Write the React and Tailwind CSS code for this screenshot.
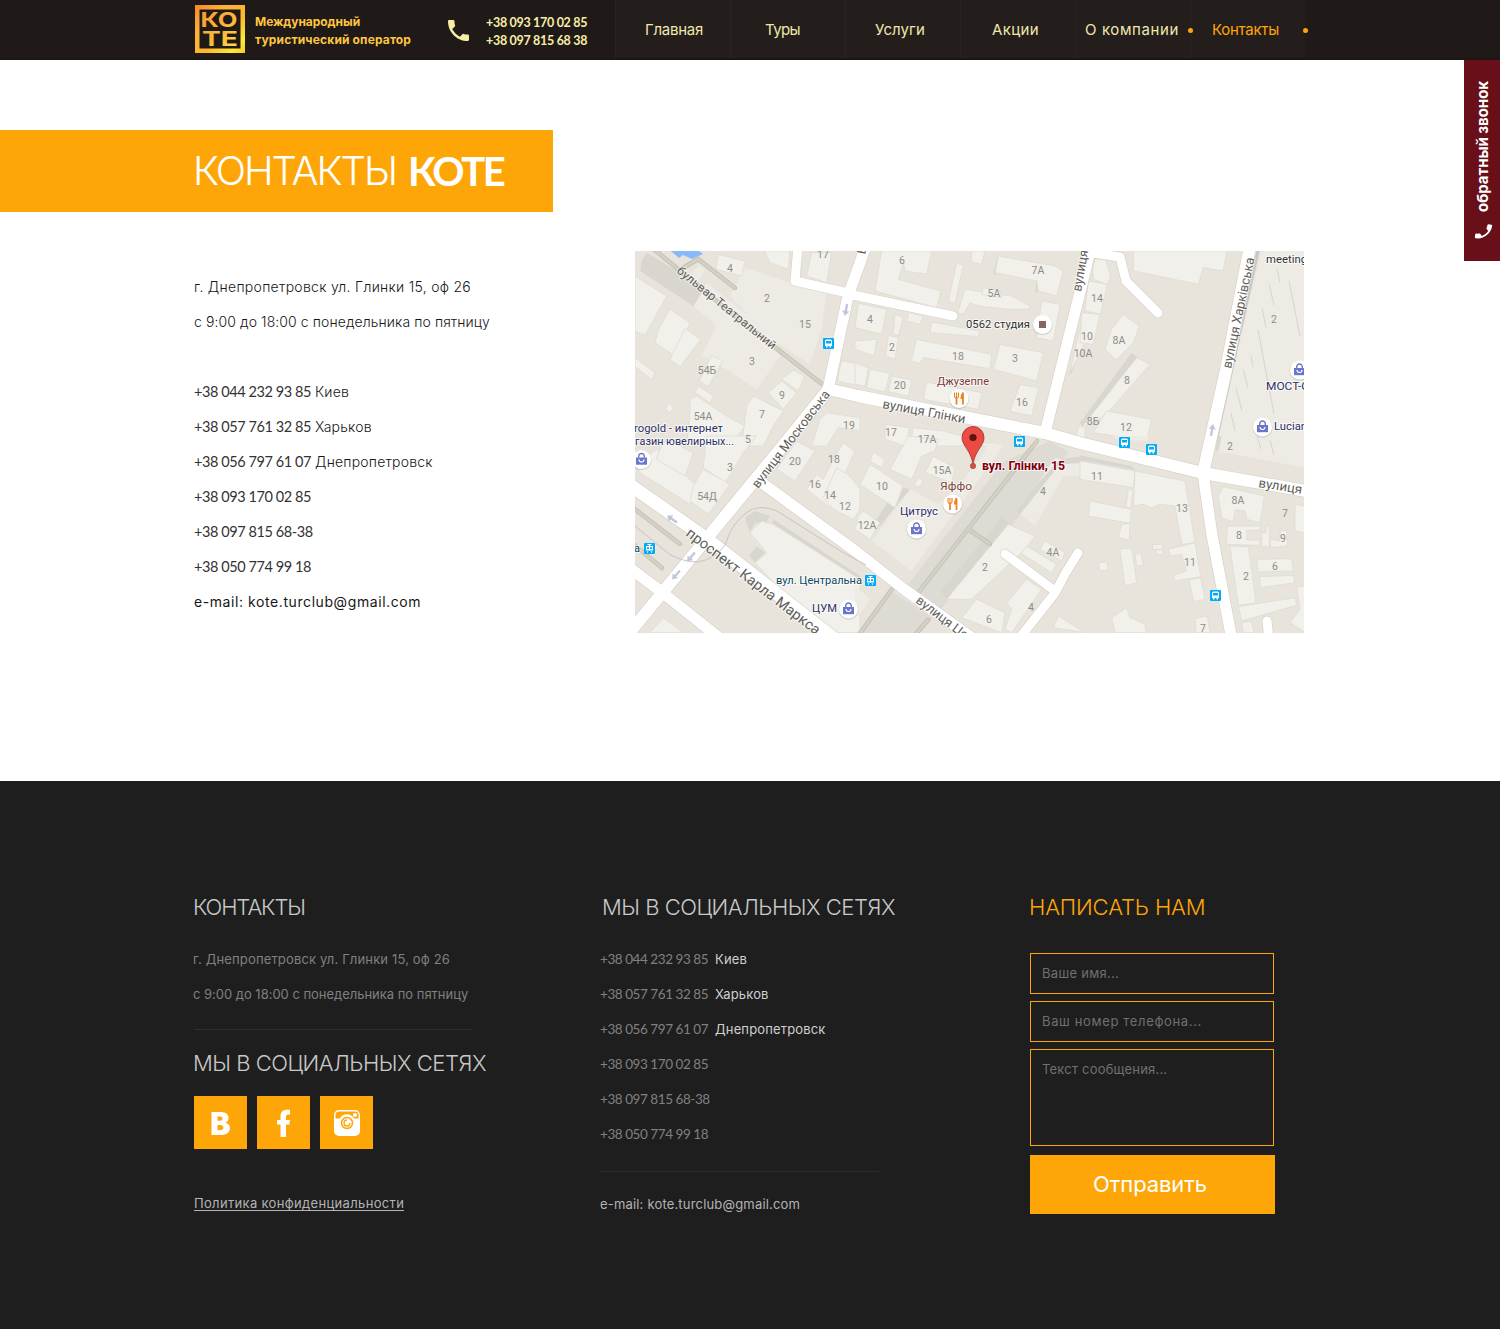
const NAV = [
  { label: "Главная", cls: "pl-[29px] tracking-[-0.26px]" },
  { label: "Туры", cls: "pl-[34px] tracking-[-0.6px]" },
  { label: "Услуги", cls: "pl-[29px] tracking-[0.1px]" },
  { label: "Акции", cls: "pl-[31px] tracking-[0.36px]" },
  { label: "О компании", cls: "pl-[9px] tracking-[0.6px]", dot: true },
  { label: "Контакты", cls: "pl-[21px] tracking-[-0.27px] text-[#fea607]", dot: true },
];

const PHONES = [
  { number: "+38 044 232 93 85", city: "Киев" },
  { number: "+38 057 761 32 85", city: "Харьков" },
  { number: "+38 056 797 61 07", city: "Днепропетровск" },
  { number: "+38 093 170 02 85" },
  { number: "+38 097 815 68-38" },
  { number: "+38 050 774 99 18" },
];

const HANDSET =
  "M6.62 10.79c1.44 2.83 3.76 5.14 6.59 6.59l2.2-2.2c.27-.27.67-.36 1.02-.24 1.12.37 2.33.57 3.57.57.55 0 1 .45 1 1V20c0 .55-.45 1-1 1-9.39 0-17-7.61-17-17 0-.55.45-1 1-1h3.5c.55 0 1 .45 1 1 0 1.25.2 2.45.57 3.57.11.35.03.74-.25 1.02l-2.2 2.2z";

function Logo() {
  return (
    <svg className="block h-[49px] w-[50px]" viewBox="0 0 50 49">
      <defs>
        <linearGradient id="gold" x1="0" y1="0" x2="1" y2="1">
          <stop offset="0" stopColor="#f9862b" />
          <stop offset="0.3" stopColor="#fdb13a" />
          <stop offset="0.6" stopColor="#fcb92c" />
          <stop offset="0.85" stopColor="#fde93c" />
          <stop offset="1" stopColor="#f9c81e" />
        </linearGradient>
        <linearGradient id="goldText" gradientUnits="userSpaceOnUse" x1="5" y1="5" x2="45" y2="44">
          <stop offset="0" stopColor="#f9962f" />
          <stop offset="0.5" stopColor="#fcb636" />
          <stop offset="1" stopColor="#fbe33a" />
        </linearGradient>
      </defs>
      <rect width="50" height="48" fill="url(#gold)" />
      <rect x="4.5" y="4.5" width="41" height="39" fill="#1f1918" />
      <g fill="url(#goldText)" fontFamily="Inter, sans-serif" fontWeight="700" fontSize="20.500">
        <text x="5.500" y="22.300" textLength="37" lengthAdjust="spacingAndGlyphs">КО</text>
        <text x="7" y="41" textLength="36" lengthAdjust="spacingAndGlyphs">ТЕ</text>
      </g>
    </svg>
  );
}

function Header() {
  return (
    <header className="flex h-[60px] border-b-2 border-[#1b1615] bg-[#1f1918] pl-[195px]">
      <div className="w-[60px] pt-[5px]">
        <Logo />
      </div>
      <div className="w-[193px] pt-[13px] text-[12px] leading-[18px] font-bold text-[#fec540]">
        <div className="tracking-[-0.05px]">Международный</div>
        <div className="tracking-[0.15px]">туристический оператор</div>
      </div>
      <svg className="mt-[20px] h-[21px] w-[21px] text-[#f8eda6]" viewBox="3 3 18 18" fill="currentColor">
        <path d={HANDSET} />
      </svg>
      <div className="ml-[17px] w-[129px] pt-[14px] font-['Lato',sans-serif] text-[12.5px] leading-[18px] font-bold tracking-[-0.31px] text-[#f8eda6]">
        <div>+38 093 170 02 85</div>
        <div>+38 097 815 68 38</div>
      </div>
      <nav className="flex bg-[#231d1c] text-[15px] leading-[60px] text-[#efe8ac]">
        {NAV.map((item) => (
          <a key={item.label} className={`relative w-[115px] border-l border-[#292322] whitespace-nowrap ${item.cls}`}>
            {item.label}
            {item.dot && <span className="absolute top-[28px] right-[-3px] z-10 h-[5px] w-[5px] rounded-full bg-[#fea607]" />}
          </a>
        ))}
      </nav>
    </header>
  );
}

function CallTab() {
  return (
    <aside className="absolute top-[60px] right-0 flex h-[201px] w-[36px] flex-col items-center bg-[#680f19] pt-[21px] pl-[2px] text-white">
      <span className="rotate-180 text-[15px] leading-[20px] font-bold tracking-[-0.05px] whitespace-nowrap [writing-mode:vertical-rl]">
        обратный звонок
      </span>
      <svg className="mt-[10px] h-[19px] w-[19px] rotate-[-82deg]" viewBox="1 1 22 22" fill="currentColor">
        <path d={HANDSET} />
      </svg>
    </aside>
  );
}

/* Building outlines, grouped by map tile; each tile is drawn at three units per pixel. */
const TILES = [
  {
    at: "translate(630 246) scale(0.33333)",
    light: [
      "15,90 30,100 110,150 45,268 15,255",
      "120,190 180,230 170,255 128,325 75,290 85,250",
      "165,248 212,280 150,362 120,340",
      "15,335 75,380 65,400 15,362",
      "245,328 278,345 235,422 208,405",
      "205,420 250,450 240,470 195,440",
      "180,460 200,450 290,510 345,540 300,600 170,600 180,500",
      "118,472 130,485 120,500 106,488",
      "265,25 345,45 335,90 258,70",
      "405,15 480,15 475,70 420,50",
      "370,450 460,495 430,540 400,600 335,600 350,480",
      "415,440 455,405 500,440 460,490",
      "455,400 490,372 524,390 505,435",
      "545,20 605,20 590,110 530,90",
      "675,280 690,284 690,308 668,302",
      "635,345 690,355 690,420 622,405",
      "570,520 590,500 690,515 690,555 625,545 590,600 545,600",
    ],
    pale: [
      "345,65 480,110 590,135 575,250 540,355 440,290 300,150",
      "190,180 230,110 330,190 410,240 450,330 380,430 290,370 240,340 215,330 260,240",
      "180,90 205,60 225,70 205,105",
    ],
    dark: ["35,45 50,20 225,125 190,180 30,75"],
  },
  {
    at: "translate(855 246) scale(0.33333)",
    light: [
      "80,15 230,15 215,85 150,75 145,50 130,100 258,135 245,185 60,135",
      "350,15 390,15 380,55 348,48",
      "305,52 325,58 300,172 280,165",
      "330,130 470,150 525,180 520,190 460,190 370,180 345,170 325,205 308,200",
      "385,125 435,135 440,155 380,145",
      "430,30 600,60 625,75 605,150 550,135 545,105 420,80",
      "560,165 615,175 595,285 545,275",
      "10,172 95,190 80,265 0,245",
      "120,205 145,212 130,270 115,262",
      "160,200 205,210 195,235 157,225",
      "230,228 375,255 370,272 225,260",
      "100,268 130,275 120,340 92,332",
      "0,285 65,280 58,330 0,310",
      "185,280 210,285 410,325 405,368 205,335 195,352 168,345",
      "435,295 565,320 545,405 415,370",
      "0,350 40,365 30,420 0,415",
      "45,370 105,382 90,438 35,425",
      "110,390 170,402 160,450 100,438",
      "215,408 380,440 370,490 205,460",
      "495,415 550,425 530,510 465,495",
      "90,535 165,545 150,600 90,580",
      "175,545 265,555 340,575 420,600 165,600",
      "650,600 690,495 690,600",
      "690,190 660,310 645,380 690,290",
    ],
    dark: ["430,20 415,80 420,90 430,30", "545,105 540,140 550,135 550,100", "495,410 465,495 470,500 500,440", "680,240 640,390 650,380 690,270"],
  },
  {
    at: "translate(1080 246) scale(0.33333)",
    light: [
      "45,38 78,42 92,95 80,115 40,100 38,70",
      "25,105 82,115 62,205 15,195",
      "5,200 60,205 40,295 0,290",
      "130,205 178,240 160,290 108,342 75,310 95,250",
      "160,15 440,15 430,75 370,65 355,115 160,75",
      "170,335 210,355 75,510 5,545",
      "80,495 215,520 200,585 40,560",
    ],
    pale: ["545,15 675,15 675,600 405,600 425,500"],
    dark: ["155,320 172,335 15,530 5,545 0,530"],
  },
  {
    at: "translate(630 436) scale(0.33333)",
    light: [
      "15,85 80,40 190,140 205,130 180,205 30,110",
      "90,40 110,10 190,50 165,120 80,70",
      "230,0 380,0 340,50 305,110 285,140 220,95",
      "190,150 220,100 300,145 235,235 180,195",
      "500,15 555,45 495,135 440,100",
      "640,20 675,45 600,215 530,160 560,115 580,130 600,90",
      "620,95 660,120 690,160 690,220 670,250 610,220 580,185",
      "100,545 160,590 60,590",
      "360,290 395,255 430,265 690,430 690,590 570,590 375,380 410,350",
    ],
    dark: ["345,245 375,225 420,240 410,258 375,260 360,290", "430,250 690,420 690,440 425,268", "380,330 405,350 375,380 358,358"],
  },
  {
    at: "translate(855 436) scale(0.33333)",
    light: [
      "160,0 250,10 240,45 200,60 170,130 105,100 130,55",
      "235,60 300,95 290,140 210,110",
      "55,48 90,70 80,95 45,75",
      "45,85 145,150 120,215 15,145",
      "190,125 205,135 192,155 178,145",
      "570,315 630,350 620,375 555,340",
      "490,315 605,385 590,410 480,340",
      "515,430 560,460 470,590 450,580 470,520 455,500",
      "365,490 450,530 440,590 320,545",
      "460,265 540,300 510,340 350,490 275,490",
      "610,540 690,590 595,575",
      "25,225 75,260 45,310 0,280 10,240",
    ],
    pale: [
      "165,160 250,205 310,150 380,60 400,20 445,30 170,405 50,315",
      "600,65 690,80 690,120 625,120 540,270 490,230",
      "0,450 45,490 10,540 0,540",
    ],
    dark: ["550,140 615,70 690,60 690,80 615,85 495,235 485,225", "440,245 465,265 275,490 258,465", "130,150 165,160 45,305 35,295"],
  },
  {
    at: "translate(1080 436) scale(0.33333)",
    light: [
      "0,75 165,105 160,155 0,130",
      "165,105 315,135 345,320 305,325 285,210 240,205 215,215 190,205 160,210",
      "30,195 155,220 150,262 25,240",
      "145,160 160,162 152,215 138,212",
      "125,265 150,262 148,312 115,305",
      "120,340 155,335 170,440 135,450",
      "165,355 182,352 190,385 170,392",
      "55,380 80,378 85,402 60,405",
      "218,325 248,325 248,340 218,340",
      "228,342 248,342 248,355 228,355",
      "265,340 345,320 362,422 285,435 280,418 320,405 305,355 270,360",
      "328,432 362,425 375,490 340,497",
      "345,548 382,540 390,590 348,590",
      "95,545 140,515 150,545 195,565 198,590 105,590",
      "430,152 553,180 540,260 500,250 495,225 465,222 460,258 425,245 415,180",
      "442,270 540,270 540,283 500,283 500,312 540,312 540,328 440,325",
      "558,270 568,270 568,332 545,332 545,290 558,290",
      "570,310 600,315 600,285 620,283 622,330 572,335",
      "645,205 675,210 675,290 645,285",
      "450,330 505,332 528,500 475,508",
      "530,370 635,368 640,405 535,408",
      "540,422 640,418 645,440 540,455",
      "475,512 645,485 650,508 485,555",
      "485,560 515,555 522,590 490,590",
      "650,452 675,450 675,590 630,560 660,520",
    ],
    pale: ["415,0 675,0 675,95 410,45", "100,0 210,0 200,15 110,10"],
    dark: ["0,58 155,90 165,102 0,72", "412,0 425,0 415,45 407,45"],
  },
];

const ROADS = [
  ["866,246 848,296 828,390", 11],
  ["828,390 790,437 703,543 663,592 625,638", 12],
  ["828,389 858,396 1045,433 1080,443 1203,473 1312,492", 12],
  ["798,246 795,281 848,293", 9],
  ["848,294 953,316", 9],
  ["1091,246 1085,272 1045,433", 11],
  ["1086,252 1120,257 1126,281 1158,313", 9],
  ["1250,246 1226,370 1203,473", 12],
  ["1203,473 1212,535 1232,640", 11],
  ["626,482 707,539 836,640", 13],
  ["626,565 663,593 722,640", 11],
  ["762,483 858,553 905,590 975,640", 11],
  ["1005,554 1055,591", 9],
  ["1078,553 1065,574 1055,593 1018,640", 9],
  ["1267,621 1269,640", 9],
];

const PATHS = [
  "650,246 735,316 822,384",
  "683,268 698,259 735,288",
  "1037,441 968,529 918,593",
  "968,529 990,544",
  "892,589 858,636",
  "928,620 914,636",
  "632,507 680,544",
  "632,543 662,568",
];

const NUMBERS = [
  [730, 268, "4"], [767, 298, "2"], [805, 324, "15"], [752, 361, "3"], [707, 370, "54Б"], [782, 395, "9"],
  [703, 416, "54А"], [762, 414, "7"], [748, 439, "5"], [849, 425, "19"], [823, 254, "17"], [902, 260, "6"],
  [1038, 270, "7А"], [994, 293, "5А"], [870, 319, "4"], [892, 347, "2"], [958, 356, "18"], [1015, 358, "3"],
  [900, 385, "20"], [1022, 402, "16"], [891, 432, "17"], [927, 439, "17А"], [1097, 298, "14"], [1087, 336, "10"],
  [1083, 353, "10А"], [1119, 340, "8А"], [1127, 380, "8"], [1093, 421, "8Б"], [1126, 427, "12"], [1274, 319, "2"],
  [1230, 446, "2"], [730, 467, "3"], [707, 496, "54Д"], [795, 461, "20"], [834, 459, "18"], [815, 484, "16"],
  [830, 495, "14"], [845, 506, "12"], [942, 470, "15А"], [882, 486, "10"], [867, 525, "12А"], [1043, 491, "4"],
  [1053, 552, "4А"], [985, 567, "2"], [1031, 607, "4"], [989, 619, "6"], [1097, 476, "11"], [1182, 508, "13"],
  [1190, 562, "11"], [1203, 628, "7"], [1238, 500, "8А"], [1285, 513, "7"], [1239, 535, "8"], [1283, 538, "9"],
  [1246, 576, "2"], [1275, 566, "6"],
];

const POI_TEXT = [
  [966, 328, 64, "0562 студия", "#333333"],
  [937, 385, 52, "Джузеппе", "#7d3b36"],
  [940, 490, 32, "Яффо", "#7d4a36"],
  [900, 515, 38, "Цитрус", "#2b2f66"],
  [812, 612, 25, "ЦУМ", "#2b2f66"],
  [776, 584, 86, "вул. Центральна", "#0f4a63"],
  [1266, 390, 43, "МОСТ-С", "#2b2f66"],
  [1274, 430, 33, "Lucian", "#2b2f66"],
  [1266, 263, 41, "meeting", "#333333"],
  [634, 432, 89, "rogold - интернет", "#2b2f66"],
  [635, 445, 99, "газин ювелирных...", "#2b2f66"],
  [634, 552, 6, "а", "#0f4a63"],
];

const STREETS = [
  ["translate(676 272) rotate(39)", 124, 12, "бульвар Театральний"],
  ["translate(758 489) rotate(-52.5)", 119, 13, "вулиця Московська"],
  ["translate(882 408) rotate(10.5)", 84, 13, "вулиця Глінки"],
  ["translate(1081 292) rotate(-80)", 42, 13, "вулиця"],
  ["translate(1231 369) rotate(-78)", 113, 13, "вулиця Харківська"],
  ["translate(1258 487) rotate(9)", 44, 13, "вулиця"],
  ["translate(685 535) rotate(37.5)", 165, 14.5, "проспект Карла Маркса"],
  ["translate(915 602) rotate(37.5)", 62, 13, "вулиця Це"],
  ["translate(865 255) rotate(-78)", 9, 12, "В"],
];

const BAGS = [[641.5, 459.5], [916.5, 529], [848.5, 609], [1262.5, 427], [1299.5, 370]];
const FOOD = [[959, 398.5], [952.5, 504]];
const BUSES = [[828.5, 343.5], [1019.5, 441.5], [1124.5, 442.5], [1151.5, 449.5], [1215.5, 595.5]];
const TRAMS = [[649.5, 548.5], [870.5, 580.5]];
const ARROWS = [[846, 310, 190], [672, 519, -55], [691, 557, 220], [676, 575, 220], [1212, 430, 10]];

function CityMap() {
  return (
    <svg className="block h-[382px] w-[669px]" viewBox="635 251 669 382" fontFamily="Roboto, sans-serif">
      <rect x="635" y="251" width="669" height="382" fill="#e8e4dc" />
      <g fill="#dedad4">
        <polygon points="1003,462 1050,441 1068,452 1008,530 940,610 905,588" />
        <polygon points="893,592 932,618 915,640 856,640" />
      </g>
      {TILES.map((tile) => (
        <g key={tile.at} transform={tile.at}>
          <g fill="#eeebe5">{tile.pale && tile.pale.map((p) => <polygon key={p} points={p} />)}</g>
          <g fill="#d9d6d0">{tile.dark.map((p) => <polygon key={p} points={p} />)}</g>
          <g fill="#f1f0ea" stroke="#e0dcd3" strokeWidth="2.500">{tile.light.map((p) => <polygon key={p} points={p} />)}</g>
        </g>
      ))}
      <path d="M671 251l8 7 4-3 9 4 11-5-4-3z" fill="#8ab9fb" />
      <path d="M1258 251L1217 437" stroke="#c9c7c6" strokeWidth="3" fill="none" />
      <path
        d="M1277 269l3 14M1289 281l11 55M1269 284l5 21M1262 308l4 20M1258 330l16 84M1251 356l2 11M1243 369l5 19M1236 388l6 23M1231 413l4 18M1257 436l4 13M1270 440l4 15"
        stroke="#cfcdcb" strokeWidth="0.8"
      />
      <g fill="none" strokeLinecap="round">
        {PATHS.map((p) => <polyline key={p} points={p} stroke="#bdbbae" strokeWidth="4.400" />)}
        {PATHS.map((p) => <polyline key={p} points={p} stroke="#d3d1c4" strokeWidth="3" />)}
      </g>
      <g fill="none" strokeLinecap="round" strokeLinejoin="round">
        {ROADS.map(([p, w]) => <polyline key={p} points={p} stroke="#d8d3c9" strokeWidth={w + 1.4} />)}
        {ROADS.map(([p, w]) => <polyline key={p} points={p} stroke="#ffffff" strokeWidth={w} />)}
      </g>
      <path
        d="M635 526Q652 540 669 554Q683 562 698 562Q715 559 725 545Q732 523 746 513Q758 503 777 511L842 552L866 565"
        fill="none" stroke="#c6c5c7" strokeWidth="1"
      />
      {ARROWS.map(([x, y, a]) => (
        <path key={`${x}`} transform={`translate(${x} ${y}) rotate(${a})`} d="M0-6l3.600 5H1.200v7h-2.400v-7h-2.400z" fill="#c3c5dc" />
      ))}
      <g fill="#8f8d89" fontSize="10.500" textAnchor="middle">
        {NUMBERS.map(([x, y, t]) => <text key={`${x}-${y}`} x={x} y={y + 4}>{t}</text>)}
      </g>
      <g fill="#5f5d5a" stroke="#ffffff" strokeWidth="2" strokeOpacity="0.6" paintOrder="stroke">
        {STREETS.map(([at, len, size, t]) => (
          <text key={at} transform={at} fontSize={size} textLength={len} lengthAdjust="spacingAndGlyphs">{t}</text>
        ))}
      </g>
      <g fontSize="11.500" stroke="#ffffff" strokeWidth="2" strokeOpacity="0.7" paintOrder="stroke">
        {POI_TEXT.map(([x, y, len, t, c]) => (
          <text key={t} x={x} y={y} fill={c} textLength={len} lengthAdjust="spacingAndGlyphs">{t}</text>
        ))}
      </g>
      {[...BAGS, ...FOOD, [1042.5, 324.5]].map(([x, y]) => (
        <g key={`${x}-${y}`}>
          <circle cx={x} cy={y + 0.8} r="10" fill="#00000022" />
          <circle cx={x} cy={y} r="9.500" fill="#ffffff" />
        </g>
      ))}
      {BAGS.map(([x, y]) => (
        <g key={x} transform={`translate(${x} ${y})`}>
          <path d="M-5.500-2h11V5.200h-11z" fill="#6b76c8" />
          <path d="M-2.800-2v-1.200a2.800 2.800 0 0 1 5.600 0V-2" fill="none" stroke="#6b76c8" strokeWidth="1.400" />
          <path d="M-2.500 0a2.500 2.500 0 0 0 5 0" fill="none" stroke="#ffffff" strokeWidth="1.200" />
        </g>
      ))}
      {FOOD.map(([x, y]) => (
        <g key={x} transform={`translate(${x} ${y})`} fill="none" stroke="#ef8220">
          <path d="M-4.500-6v4q0 1.500 2 1.500t2-1.500v-4M-2.500-6v5" strokeWidth="1.100" />
          <path d="M-2.500-1v7" strokeWidth="1.800" />
          <path d="M4-6v12" strokeWidth="1.800" />
          <path d="M4-6q-2.500 1-2.500 6.500H4z" fill="#ef8220" stroke="none" />
        </g>
      ))}
      <rect x="1039" y="321" width="7" height="7" fill="#84665f" />
      {BUSES.map(([x, y]) => (
        <g key={x} transform={`translate(${x} ${y})`}>
          <rect x="-5.500" y="-5.500" width="11" height="11" rx="1" fill="#00acf8" />
          <path d="M-3.500-2.500q0-1.500 1.500-1.500h4q1.500 0 1.500 1.500v5h-1v1.500h-1.500v-1.500h-2v1.500h-1.500v-1.500h-1z" fill="#ffffff" />
          <rect x="-2.500" y="-2.500" width="5" height="2.500" fill="#00acf8" />
        </g>
      ))}
      {TRAMS.map(([x, y]) => (
        <g key={x} transform={`translate(${x} ${y})`}>
          <rect x="-5.500" y="-5.500" width="11" height="11" rx="1" fill="#00acf8" />
          <path d="M-2-4.500h4v1h-1.500v1h3v4.500h-7v-4.500h3v-1h-1.500zM-3 3h2l-1 1.500zM1 3h2l-1 1.500z" fill="#ffffff" />
          <path d="M-2.500-1.200h2v1.700h-2zM.5-1.200h2v1.700h-2z" fill="#00acf8" />
        </g>
      ))}
      <path
        d="M973 465.500c-1-9-4-13-7-18-2.500-3.500-4-6.500-4-10a11 11 0 0 1 22 0c0 3.500-1.500 6.500-4 10-3 5-6 9-7 18z"
        fill="#ea4b42" stroke="#a52f2b" strokeWidth="0.8"
      />
      <circle cx="973" cy="437.500" r="3.600" fill="#5c1510" />
      <circle cx="973" cy="466" r="2.700" fill="#dd4b45" stroke="#a5413a" strokeWidth="0.6" />
      <text
        x="982" y="470" fontSize="12" fontWeight="700" fill="#82000a" stroke="#ffffff" strokeWidth="2"
        strokeOpacity="0.7" paintOrder="stroke" textLength="83" lengthAdjust="spacingAndGlyphs"
      >
        вул. Глінки, 15
      </text>
    </svg>
  );
}

function ContactDetails() {
  return (
    <div className="w-[441px] pt-[18px] text-[14px] leading-[35px] font-light text-[#161616]">
      <p className="tracking-[0.28px]">г. Днепропетровск ул. Глинки 15, оф 26</p>
      <p className="mb-[35px] tracking-[0.09px]">с 9:00 до 18:00 с понедельника по пятницу</p>
      {PHONES.map((p) => (
        <p key={p.number} className="flex">
          <span className="w-[121px] font-['Lato',sans-serif] text-[14.5px] font-normal tracking-[-0.42px] text-[#333333]">{p.number}</span>
          {p.city && <span className="tracking-[0.2px]">{p.city}</span>}
        </p>
      ))}
      <p className="font-normal tracking-[0.58px]">e-mail: kote.turclub@gmail.com</p>
    </div>
  );
}

function SocialButton({ children }) {
  return (
    <a className="flex h-[53px] w-[53px] items-center justify-center bg-[#fea607]">
      <svg className="h-[28px] w-[28px]" viewBox="0 0 28 28" fill="#ffffff">{children}</svg>
    </a>
  );
}

function Footer() {
  return (
    <footer className="mt-[148px] flex h-[548px] bg-[#1e1e1e] pt-[108px] pl-[193px] text-[13px] leading-[35px] text-[#808080]">
      <section className="w-[407px]">
        <h2 className="mb-[17px] text-[22px] leading-[36px] font-light tracking-[-1.09px] text-[#c8c8c8]">КОНТАКТЫ</h2>
        <p className="tracking-[0.15px]">г. Днепропетровск ул. Глинки 15, оф 26</p>
        <p className="tracking-[-0.02px]">с 9:00 до 18:00 с понедельника по пятницу</p>
        <div className="mt-[17px] ml-px w-[279px] border-t border-[#2e2e2e]" />
        <h2 className="mt-[15px] text-[22px] leading-[36px] font-light tracking-[-0.48px] text-[#c8c8c8]">МЫ В СОЦИАЛЬНЫХ СЕТЯХ</h2>
        <div className="mt-[15px] ml-px flex gap-[10px]">
          <SocialButton>
            <path
              fillRule="evenodd"
              d="M4.500 3H13c5.500 0 8.500 2 8.500 6 0 2.500-1.300 4-3.200 4.800 2.600.7 4.700 2.500 4.700 5.200 0 4.600-3.700 7-9 7H4.500zM10.500 7.500v4.300h2c2 0 3-.6 3-2.200s-1-2.100-3-2.100zM10.500 16v5.300h2.500c2.200 0 3.400-.8 3.400-2.700S15.200 16 13 16z"
            />
          </SocialButton>
          <SocialButton>
            <path d="M10.500 28V15.500H7V11h3.500V7.500C10.500 3 13 .8 17 .8h3v4.700h-2c-1.500 0-2 .8-2 2.500v3h4l-.6 4.500H16V28z" />
          </SocialButton>
          <SocialButton>
            <path
              fillRule="evenodd"
              d="M6 1h16a5 5 0 0 1 5 5v16a5 5 0 0 1-5 5H6a5 5 0 0 1-5-5V6a5 5 0 0 1 5-5zM2.500 9.500H7a8 8 0 0 1 14 0h4.500V6A3.500 3.500 0 0 0 22 2.500H6A3.500 3.500 0 0 0 2.500 6z"
            />
            <circle cx="14" cy="14" r="7" />
            <circle cx="14" cy="14" r="5.500" fill="none" stroke="#fea607" strokeWidth="1.500" />
            <path d="M14 11a3 3 0 1 0 3 3" fill="none" stroke="#fea607" strokeWidth="1.300" />
            <circle cx="22" cy="6" r="2" />
          </SocialButton>
        </div>
        <a className="mt-[47px] ml-px inline-block border-b border-[#b4b4b4] text-[13px] leading-[14px] tracking-[0.33px] text-[#b4b4b4]">
          Политика конфиденциальности
        </a>
      </section>
      <section className="w-[430px]">
        <h2 className="mb-[17px] ml-[2px] text-[22px] leading-[36px] font-light tracking-[-0.48px] text-[#c8c8c8]">МЫ В СОЦИАЛЬНЫХ СЕТЯХ</h2>
        {PHONES.map((p) => (
          <p key={p.number} className="flex">
            <span className="w-[115px] font-['Lato',sans-serif] text-[13.5px] tracking-[-0.44px]">{p.number}</span>
            {p.city && <span className="tracking-[0.15px] text-[#d0d0d0]">{p.city}</span>}
          </p>
        ))}
        <div className="mt-[19px] mb-[15px] w-[279px] border-t border-[#2e2e2e]" />
        <p className="tracking-[0.18px] text-[#b4b4b4]">e-mail: kote.turclub@gmail.com</p>
      </section>
      <section className="w-[245px]">
        <h2 className="-ml-px text-[22px] leading-[36px] font-light tracking-[-0.12px] text-[#fea607]">НАПИСАТЬ НАМ</h2>
        <form className="mt-[28px] flex flex-col text-[#707070]">
          <div className="h-[41px] w-[244px] border border-[#fea607] pl-[11px] leading-[39px] tracking-[0.3px]">Ваше имя...</div>
          <div className="mt-[7px] h-[41px] w-[244px] border border-[#fea607] pl-[11px] leading-[39px] tracking-[0.65px]">Ваш номер телефона...</div>
          <div className="mt-[7px] h-[97px] w-[244px] border border-[#fea607] pl-[11px] leading-[39px] tracking-[0.2px]">Текст сообщения...</div>
          <button type="button" className="mt-[9px] h-[59px] w-[245px] bg-[#fea607] pr-[5px] text-[22px] tracking-[-0.1px] text-white">
            Отправить
          </button>
        </form>
      </section>
    </footer>
  );
}

export default function App() {
  return (
    <div className="relative min-h-[1329px] w-[1500px] overflow-hidden bg-white font-['Inter',sans-serif]">
      <Header />
      <CallTab />
      <main>
        <h1 className="mt-[70px] flex h-[82px] w-[553px] items-center bg-[#fea607] pl-[193px] text-[40px] font-light whitespace-nowrap text-white">
          <span className="w-[215px] tracking-[-2.06px]">КОНТАКТЫ</span>
          <b className="font-['Lato',sans-serif] text-[40px] font-bold tracking-[-2.4px]">КОТЕ</b>
        </h1>
        <div className="mt-[39px] flex pl-[194px]">
          <ContactDetails />
          <CityMap />
        </div>
      </main>
      <Footer />
    </div>
  );
}
